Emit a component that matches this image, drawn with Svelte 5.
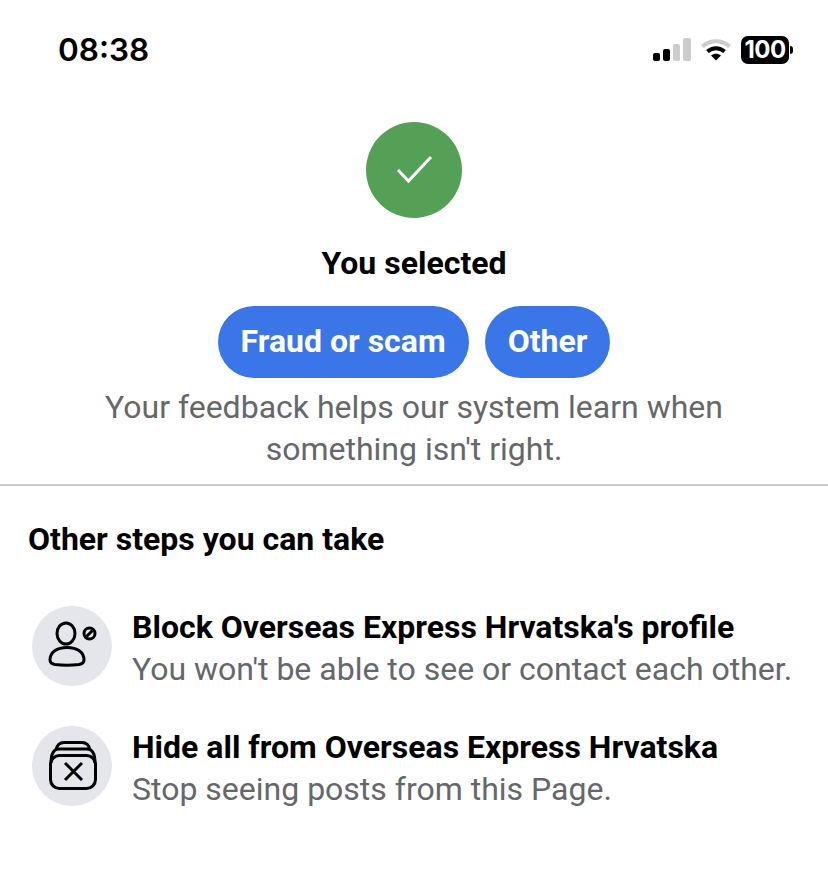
<script>
	const steps = [
		{ id: 'block', title: "Block Overseas Express Hrvatska's profile", sub: "You won't be able to see or contact each other." },
		{ id: 'hide', title: 'Hide all from Overseas Express Hrvatska', sub: 'Stop seeing posts from this Page.' }
	];
</script>

<div class="page">
	<header class="status">
		<span class="time">08:38</span>
		<div class="status-icons">
			<svg width="38" height="24" viewBox="0 0 38 24">
				<rect x="0" y="15" width="7" height="8" rx="2" fill="#000" />
				<rect x="10" y="11" width="7" height="12" rx="2" fill="#000" />
				<rect x="20" y="6" width="7" height="17" rx="2" fill="#ccc" />
				<rect x="30" y="0" width="8" height="23" rx="2" fill="#ccc" />
			</svg>
			<svg width="32" height="24" viewBox="0 0 32 24">
				<path d="M2.500 8.500C10 1.500 22 1.500 29.500 8.500" fill="none" stroke="#ccc" stroke-width="4" />
				<path d="M7.500 13.500C12.500 9 19.500 9 24.500 13.500" fill="none" stroke="#000" stroke-width="4" />
				<path d="M11 17.500C14 15 18 15 21 17.500L16 22.500Z" fill="#000" />
			</svg>
			<div class="battery">
				<span class="level">100</span>
				<span class="nub"></span>
			</div>
		</div>
	</header>

	<section class="selected">
		<div class="check">
			<svg width="40" height="32" viewBox="0 0 40 32">
				<path d="M4 16L14.500 27L37 3" fill="none" stroke="#fff" stroke-width="3" />
			</svg>
		</div>
		<h2>You selected</h2>
		<div class="pills">
			<span class="pill">Fraud or scam</span>
			<span class="pill">Other</span>
		</div>
		<p>Your feedback helps our system learn when<br />something isn't right.</p>
	</section>

	<section class="steps">
		<h3>Other steps you can take</h3>
		{#each steps as step}
			<div class="step">
				<div class="step-icon">
					{#if step.id === 'block'}
						<svg width="56" height="56" viewBox="0 0 56 56" fill="none" stroke="#000" stroke-width="3">
							<ellipse cx="22" cy="15.500" rx="9" ry="10.500" />
							<path d="M6 42C6 34 13 29.500 23 29.500C33 29.500 40 34 40 42C40 45 38 46 35 46.500C27 47.500 19 47.500 11 46.500C8 46 6 45 6 42Z" />
							<circle cx="45.500" cy="15.500" r="5.500" />
							<path d="M42.500 18.500L48.500 12.500" />
						</svg>
					{:else}
						<svg width="56" height="56" viewBox="0 0 56 56" fill="none" stroke="#000" stroke-width="3">
							<rect x="6.500" y="17.500" width="45" height="33" rx="9" />
							<path d="M7 25C7 16 10 11 15 11H43C48 11 51 16 51 25" />
							<path d="M12 12C13 7 16 4.500 20 4.500H38C42 4.500 45 7 46 12" />
							<path d="M21 25L38 42M38 25L21 42" />
						</svg>
					{/if}
				</div>
				<div class="step-text">
					<div class="step-title">{step.title}</div>
					<div class="step-sub">{step.sub}</div>
				</div>
			</div>
		{/each}
	</section>
</div>

<style>
	:global(body) {
		margin: 0;
		background: #fff;
	}

	.page {
		width: 828px;
		height: 873px;
		overflow: hidden;
		font-family: Roboto, 'Liberation Sans', sans-serif;
		color: #000;
	}

	.status {
		display: flex;
		justify-content: space-between;
		align-items: center;
		height: 100px;
		padding: 0 35px 0 58px;
	}
	.time {
		font-family: Inter, sans-serif;
		font-size: 31.500px;
		font-weight: 600;
		margin-top: -2px;
	}
	.status-icons {
		display: flex;
		align-items: center;
		gap: 9px;
	}
	.battery {
		display: flex;
		align-items: center;
		gap: 1px;
	}
	.level {
		background: #000;
		color: #fff;
		border-radius: 7px;
		width: 48px;
		height: 28px;
		line-height: 28px;
		text-align: center;
		font-family: Inter, sans-serif;
		font-size: 24px;
		font-weight: 700;
		letter-spacing: -0.5px;
	}
	.nub {
		width: 3px;
		height: 8px;
		background: #000;
		border-radius: 0 4px 4px 0;
	}

	.selected {
		display: flex;
		flex-direction: column;
		align-items: center;
		padding: 22px 0 0;
		height: 362px;
		border-bottom: 2px solid #ccc;
	}
	.check {
		width: 96px;
		height: 96px;
		border-radius: 50%;
		background: #55a057;
		display: flex;
		align-items: center;
		justify-content: center;
	}
	h2 {
		margin: 25px 0 0;
		font-size: 32px;
		line-height: 40px;
		font-weight: 700;
	}
	.pills {
		display: flex;
		gap: 16px;
		margin-top: 23px;
	}
	.pill {
		background: #3a76e8;
		color: #fff;
		font-size: 32px;
		font-weight: 700;
		line-height: 70px;
		padding: 0 23px 2px;
		border-radius: 36px;
	}
	.selected p {
		margin: 8px 0 0;
		text-align: center;
		font-size: 32px;
		line-height: 42px;
		color: #65676b;
	}

	.steps {
		padding: 0 28px;
	}
	h3 {
		margin: 33px 0 0;
		font-size: 32px;
		line-height: 40px;
		font-weight: 700;
	}
	.step {
		display: flex;
		align-items: flex-start;
		gap: 20px;
		margin-top: 47px;
		padding-left: 4px;
	}
	.step + .step {
		margin-top: 40px;
	}
	.step-icon {
		width: 80px;
		height: 80px;
		border-radius: 50%;
		background: #e4e6eb;
		display: flex;
		align-items: center;
		justify-content: center;
		flex: none;
	}
	.step-text {
		box-sizing: border-box;
		height: 80px;
		padding-top: 1px;
	}
	.step-title {
		font-size: 32px;
		line-height: 40px;
		font-weight: 700;
		white-space: nowrap;
	}
	.step-sub {
		font-size: 32px;
		line-height: 44px;
		color: #65676b;
		white-space: nowrap;
	}
</style>
